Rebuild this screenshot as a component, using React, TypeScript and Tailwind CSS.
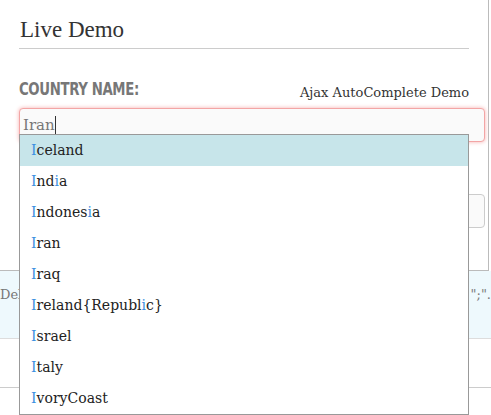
import React from 'react';

const countries = ['Iceland', 'India', 'Indonesia', 'Iran', 'Iraq', 'Ireland {Republic}', 'Israel', 'Italy', 'Ivory Coast'];

const Hl = ({ name }: { name: string }) => (
  <>
    {name.split('').map((c, i) =>
      c === 'I' || c === 'i' ? <span key={i} className="text-[#3b8fe0]">{c}</span> : <span key={i}>{c}</span>
    )}
  </>
);

export default function App() {
  return (
    <div className="relative w-[491px] h-[415px] overflow-hidden bg-white text-[#333]" style={{ fontFamily: '"DejaVu Serif", serif' }}>
      <div className="w-[489px] h-[271px] border-r border-b border-[#bbb] px-[19px] pt-[16px]">
        <div className="text-[21px] leading-[28px] text-[#333] pl-px" style={{ fontFamily: '"Liberation Serif", serif', fontSize: 23 }}>Live Demo</div>
        <div className="mt-[4px] h-px bg-[#ccc] w-[450px]" />
        <div className="mt-[26px] flex justify-between items-end w-[450px]">
          <span className="text-[#777] text-[18px] font-bold tracking-tight" style={{ fontFamily: '"DejaVu Sans Condensed", "Liberation Sans", sans-serif', transform: 'scaleX(0.82)', transformOrigin: 'left' }}>COUNTRY NAME:</span>
          <span className="text-[13px] text-[#333]">Ajax AutoComplete Demo</span>
        </div>
        <div className="mt-[6px] h-[34px] w-[466px] rounded-[4px] border border-[#f3a5a5] shadow-[0_0_4px_#f6b0b0] bg-[#fafafa] flex items-center px-[3px] text-[15px] text-[#777]">
          Iran<span className="inline-block w-px h-[19px] bg-[#333]" />
        </div>
        <div className="mt-[52px] h-[34px] w-[466px] rounded-[4px] border border-[#ccc] bg-[#fafafa]" />
      </div>
      <div className="h-[68px] bg-[#eef9fd] border-b border-[#ddd] flex items-start justify-between pt-[14px] text-[13px] text-[#777]">
        <span>Del</span>
        <span>r ";".</span>
      </div>
      <div className="mt-[48px] h-px bg-[#ccc]" />

      <div className="absolute left-[19px] top-[134px] w-[450px] border border-[#999] bg-white text-[14px] text-[#222]">
        {countries.map((c, i) => (
          <div key={c} className={`h-[31px] flex items-center pl-[11px] ${i === 0 ? 'bg-[#c7e5ea]' : ''}`}>
            <Hl name={c} />
          </div>
        ))}
      </div>
    </div>
  );
}
